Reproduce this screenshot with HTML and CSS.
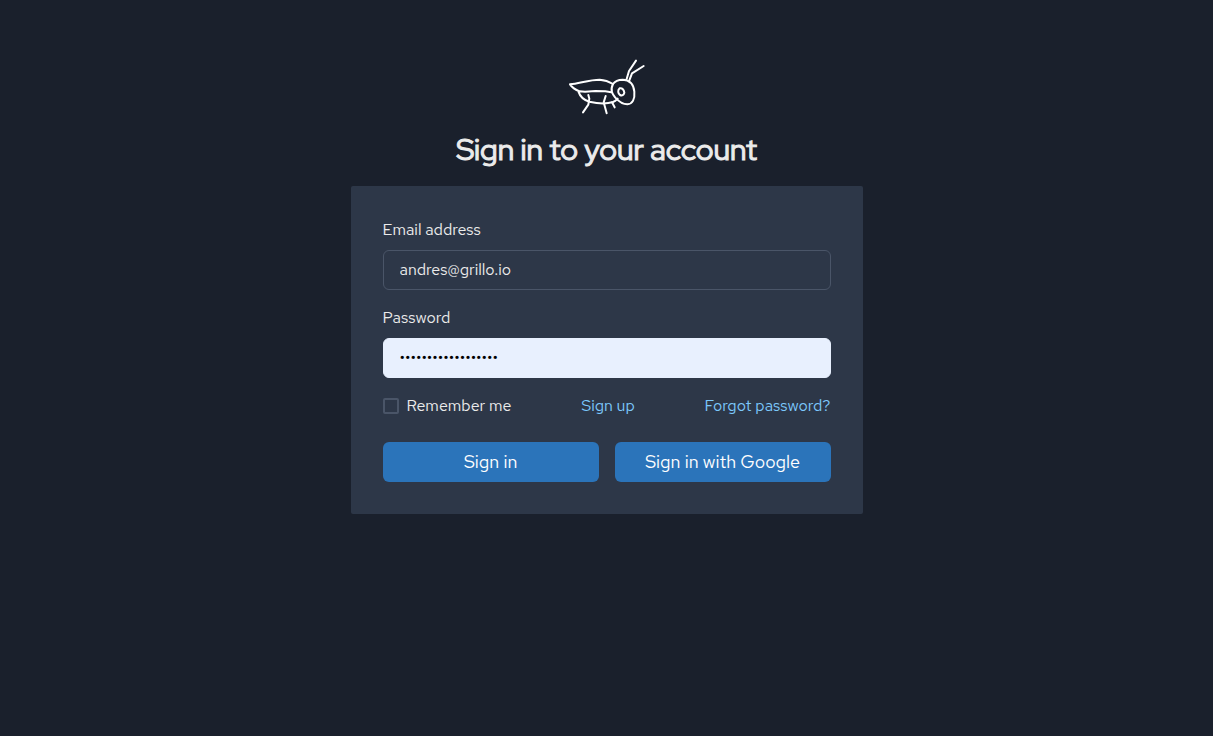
FILE: index.html
```html
<!DOCTYPE html>
<html lang="en">
<head>
<meta charset="utf-8">
<meta name="viewport" content="width=device-width, initial-scale=1">
<title>Sign in</title>
<link rel="stylesheet" href="styles.css">
</head>
<body>
<main class="page">
  <svg class="logo" viewBox="2 0 276 204" role="img" aria-label="Grillo">
    <path d="M29 97C58 94 87 83 118 83C133 84 145 88 158 96M29 97C35 106 45 113 58 118L74 119L105 117L135 118L153 121M54 118C59 133 70 144 87 149C109 154 139 156 158 150C166 147 169 143 172 140"/>
    <path d="M158 96C164 87 175 83 187 83C209 84 220 96 222 119C224 141 217 156 201 157C188 157 174 147 165 137C157 127 148 116 158 96Z"/>
    <path d="M178 109C186 107 191 114 192 122C190 130 185 132 179 129C173 124 171 115 178 109Z"/>
    <path d="M199 81L206 57L227 26M207 85L215 64L250 42M84 129L87 140L84 158L68 181M136 132L130 151L139 184M155 151L163 166"/>
  </svg>
  <h1 class="title">Sign in to your account</h1>
  <form class="card">
    <div class="field">
      <label class="label" for="email">Email address</label>
      <input class="input" id="email" type="email" value="andres@grillo.io">
    </div>
    <div class="field">
      <label class="label" for="password">Password</label>
      <input class="input input-filled" id="password" type="password" value="passwordpassword12">
    </div>
    <div class="options">
      <label class="remember"><input class="checkbox" type="checkbox">Remember me</label>
      <a class="link" href="#signup">Sign up</a>
      <a class="link" href="#forgot">Forgot password?</a>
    </div>
    <div class="actions">
      <button class="button" type="submit">Sign in</button>
      <button class="button" type="button">Sign in with Google</button>
    </div>
  </form>
</main>
</body>
</html>
```
FILE: styles.css
```css
* { box-sizing: border-box; }
body {
  margin: 0;
  min-height: 100vh;
  background: #1a202c;
  color: #ebebeb;
  font-family: "Red Hat Text", Lato, sans-serif;
  font-size: 16px;
  line-height: 24px;
}
.page {
  display: flex;
  flex-direction: column;
  align-items: center;
  padding: 52px 16px 48px;
}
.logo {
  width: 92px;
  fill: none;
  stroke: #fff;
  stroke-width: 6;
  stroke-linecap: round;
  stroke-linejoin: round;
}
.title {
  margin: 8px 0 16px;
  font-family: "Red Hat Display", "Red Hat Text", Lato, sans-serif;
  font-size: 30px;
  line-height: 42px;
  font-weight: 400;
  -webkit-text-stroke: 1px currentColor;
}
.card {
  width: 100%;
  max-width: 512px;
  padding: 32px;
  border-radius: 2px;
  background: #2d3748;
}
.field { margin-bottom: 16px; }
.label {
  display: block;
  margin-bottom: 8px;
}
.input {
  display: block;
  width: 100%;
  height: 40px;
  padding: 0 16px 2px;
  border: 1px solid #4a5568;
  border-radius: 6px;
  background: transparent;
  color: #ebebeb;
  font: inherit;
}
.input-filled {
  border-color: #e8f0fe;
  background: #e8f0fe;
  color: #000;
}
.options {
  display: flex;
  justify-content: space-between;
  margin-bottom: 24px;
}
.remember {
  display: flex;
  align-items: center;
  gap: 8px;
}
.checkbox {
  appearance: none;
  width: 16px;
  height: 16px;
  margin: 0;
  border: 2px solid #4a5568;
  border-radius: 2px;
}
.checkbox:checked { background: #90cdf4; }
.link {
  color: #7cc8fc;
  text-decoration: none;
}
.actions {
  display: grid;
  grid-template-columns: 1fr 1fr;
  gap: 16px;
}
.button {
  height: 40px;
  border: 0;
  border-radius: 6px;
  background: #2b74ba;
  color: #fff;
  font: inherit;
  font-size: 18px;
}
```
